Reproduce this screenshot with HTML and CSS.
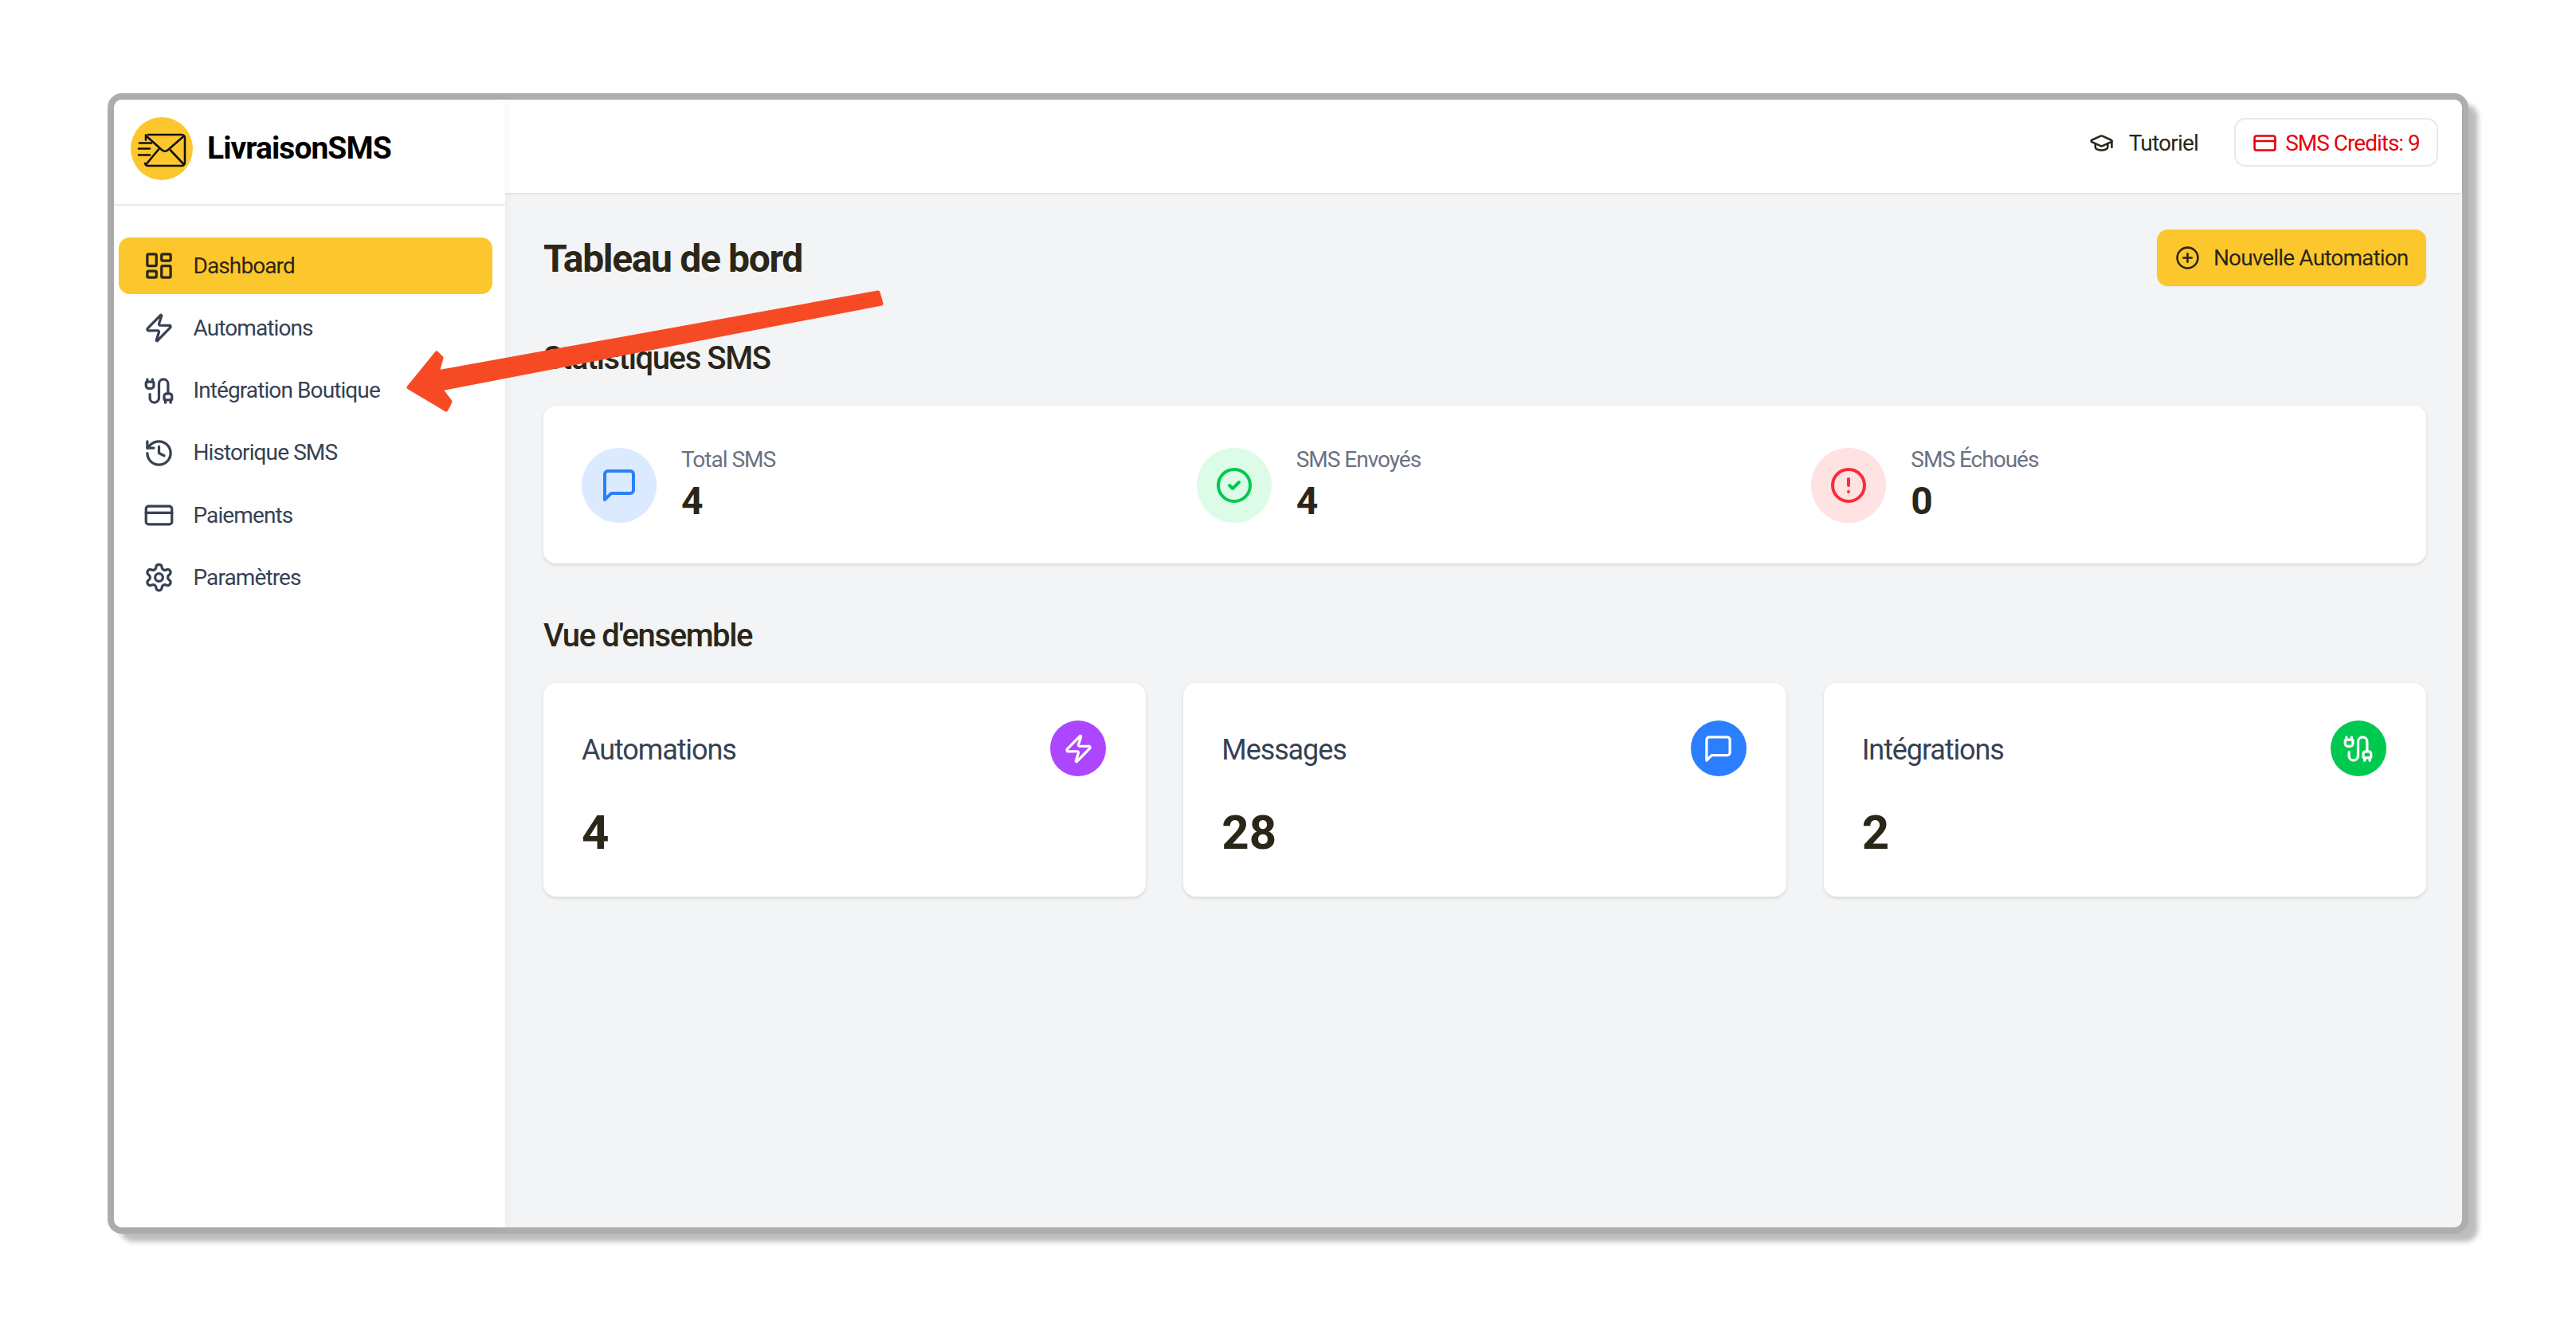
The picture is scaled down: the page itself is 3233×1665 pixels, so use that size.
FILE: index.html
```html
<!DOCTYPE html>
<html lang="fr">
<head>
<meta charset="utf-8">
<title>LivraisonSMS</title>
<link rel="stylesheet" href="styles.css">
</head>
<body>
<svg width="0" height="0" class="defs">
  <symbol id="i-dash" viewBox="0 0 24 24"><rect x="3" y="3" width="7" height="9" rx="1"/><rect x="14" y="3" width="7" height="5" rx="1"/><rect x="14" y="12" width="7" height="9" rx="1"/><rect x="3" y="16" width="7" height="5" rx="1"/></symbol>
  <symbol id="i-zap" viewBox="0 0 24 24"><path d="M4 14a1 1 0 0 1-.78-1.63l9.9-10.2a.5.5 0 0 1 .86.46l-1.92 6.02A1 1 0 0 0 13 10h7a1 1 0 0 1 .78 1.63l-9.9 10.2a.5.5 0 0 1-.86-.46l1.92-6.02A1 1 0 0 0 11 14z"/></symbol>
  <symbol id="i-cable" viewBox="0 0 24 24"><path d="M17 19a1 1 0 0 1-1-1v-2a2 2 0 0 1 2-2h2a2 2 0 0 1 2 2v2a1 1 0 0 1-1 1z"/><path d="M17 21v-2"/><path d="M19 14V6.500a1 1 0 0 0-7 0v11a1 1 0 0 1-7 0v-3"/><path d="M21 21v-2"/><path d="M3 5V3"/><path d="M4 10a2 2 0 0 1-2-2V6a1 1 0 0 1 1-1h4a1 1 0 0 1 1 1v2a2 2 0 0 1-2 2z"/><path d="M7 5V3"/></symbol>
  <symbol id="i-history" viewBox="0 0 24 24"><path d="M3 12a9 9 0 1 0 9-9 9.75 9.75 0 0 0-6.74 2.74L3 8"/><path d="M3 3v5h5"/><path d="M12 7v5l4 2"/></symbol>
  <symbol id="i-card" viewBox="0 0 24 24"><rect x="2" y="5" width="20" height="14" rx="2"/><line x1="2" y1="10" x2="22" y2="10"/></symbol>
  <symbol id="i-gear" viewBox="0 0 24 24"><path d="M12.22 2h-.44a2 2 0 0 0-2 2v.18a2 2 0 0 1-1 1.73l-.43.25a2 2 0 0 1-2 0l-.15-.08a2 2 0 0 0-2.73.73l-.22.38a2 2 0 0 0 .73 2.73l.15.1a2 2 0 0 1 1 1.72v.51a2 2 0 0 1-1 1.74l-.15.09a2 2 0 0 0-.73 2.73l.22.38a2 2 0 0 0 2.73.73l.15-.08a2 2 0 0 1 2 0l.43.25a2 2 0 0 1 1 1.73V20a2 2 0 0 0 2 2h.44a2 2 0 0 0 2-2v-.18a2 2 0 0 1 1-1.73l.43-.25a2 2 0 0 1 2 0l.15.08a2 2 0 0 0 2.73-.73l.22-.39a2 2 0 0 0-.73-2.73l-.15-.08a2 2 0 0 1-1-1.74v-.5a2 2 0 0 1 1-1.74l.15-.09a2 2 0 0 0 .73-2.73l-.22-.38a2 2 0 0 0-2.73-.73l-.15.08a2 2 0 0 1-2 0l-.43-.25a2 2 0 0 1-1-1.73V4a2 2 0 0 0-2-2z"/><circle cx="12" cy="12" r="3"/></symbol>
  <symbol id="i-cap" viewBox="0 0 24 24"><path d="M21.42 10.922a1 1 0 0 0-.019-1.838L12.83 5.18a2 2 0 0 0-1.66 0L2.6 9.08a1 1 0 0 0 0 1.832l8.57 3.908a2 2 0 0 0 1.66 0z"/><path d="M22 10v6"/><path d="M6 12.5V16a6 3 0 0 0 12 0v-3.5"/></symbol>
  <symbol id="i-plus" viewBox="0 0 24 24"><circle cx="12" cy="12" r="10"/><path d="M8 12h8"/><path d="M12 8v8"/></symbol>
  <symbol id="i-msg" viewBox="0 0 24 24"><path d="M21 15a2 2 0 0 1-2 2H7l-4 4V5a2 2 0 0 1 2-2h14a2 2 0 0 1 2 2z"/></symbol>
  <symbol id="i-check" viewBox="0 0 24 24"><circle cx="12" cy="12" r="10"/><path d="m9 12 2 2 4-4"/></symbol>
  <symbol id="i-alert" viewBox="0 0 24 24"><circle cx="12" cy="12" r="10"/><line x1="12" y1="8" x2="12" y2="12"/><line x1="12" y1="16" x2="12.01" y2="16"/></symbol>
</svg>

<div class="window">
  <aside class="sidebar">
    <div class="brand">
      <div class="logo">
        <svg viewBox="0 0 78 78" class="logo-svg">
          <path d="M22 21.500h42a4 4 0 0 1 4 4v31a4 4 0 0 1-4 4H22a4 4 0 0 1-4-3"/>
          <path d="M19.500 23 39 40.500q4 3.500 8 0L67 23"/>
          <path d="M20 58 35 40"/>
          <path d="M66 58 50 41"/>
          <path d="M19 22v6"/>
          <path d="M11 32h15M10 39h14M10 47h14"/>
        </svg>
      </div>
      <span class="brand-name">LivraisonSMS</span>
    </div>
    <nav class="nav">
      <a class="nav-item active"><svg class="ico nav-ico"><use href="#i-dash"/></svg><span class="nav-text">Dashboard</span></a>
      <a class="nav-item"><svg class="ico nav-ico"><use href="#i-zap"/></svg><span class="nav-text">Automations</span></a>
      <a class="nav-item"><svg class="ico nav-ico"><use href="#i-cable"/></svg><span class="nav-text">Intégration Boutique</span></a>
      <a class="nav-item"><svg class="ico nav-ico"><use href="#i-history"/></svg><span class="nav-text">Historique SMS</span></a>
      <a class="nav-item"><svg class="ico nav-ico"><use href="#i-card"/></svg><span class="nav-text">Paiements</span></a>
      <a class="nav-item"><svg class="ico nav-ico"><use href="#i-gear"/></svg><span class="nav-text">Paramètres</span></a>
    </nav>
  </aside>

  <div class="main">
    <header class="topbar">
      <a class="tuto"><svg class="ico top-ico"><use href="#i-cap"/></svg>Tutoriel</a>
      <div class="credits"><svg class="ico top-ico"><use href="#i-card"/></svg>SMS Credits: 9</div>
    </header>

    <section class="content">
      <div class="page-head">
        <h1>Tableau de bord</h1>
        <button class="new-btn"><svg class="ico top-ico"><use href="#i-plus"/></svg>Nouvelle Automation</button>
      </div>

      <h2 class="section-title">Statistiques SMS</h2>
      <div class="stats card">
        <div class="stat">
          <div class="stat-circle bg-blue"><svg class="ico stat-ico c-blue"><use href="#i-msg"/></svg></div>
          <div class="stat-text"><span class="stat-label">Total SMS</span><span class="stat-value">4</span></div>
        </div>
        <div class="stat">
          <div class="stat-circle bg-green"><svg class="ico stat-ico c-green"><use href="#i-check"/></svg></div>
          <div class="stat-text"><span class="stat-label">SMS Envoyés</span><span class="stat-value">4</span></div>
        </div>
        <div class="stat">
          <div class="stat-circle bg-red"><svg class="ico stat-ico c-red"><use href="#i-alert"/></svg></div>
          <div class="stat-text"><span class="stat-label">SMS Échoués</span><span class="stat-value">0</span></div>
        </div>
      </div>

      <h2 class="section-title">Vue d'ensemble</h2>
      <div class="overview">
        <div class="card ov-card">
          <div class="ov-head"><span class="ov-label">Automations</span><span class="ov-circle purple"><svg class="ico ov-ico"><use href="#i-zap"/></svg></span></div>
          <div class="ov-value">4</div>
        </div>
        <div class="card ov-card">
          <div class="ov-head"><span class="ov-label">Messages</span><span class="ov-circle blue"><svg class="ico ov-ico"><use href="#i-msg"/></svg></span></div>
          <div class="ov-value">28</div>
        </div>
        <div class="card ov-card">
          <div class="ov-head"><span class="ov-label">Intégrations</span><span class="ov-circle green"><svg class="ico ov-ico"><use href="#i-cable"/></svg></span></div>
          <div class="ov-value">2</div>
        </div>
      </div>
    </section>
  </div>

  <svg class="arrow" viewBox="0 0 640 180">
    <polygon points="600,11 604,25 51,132 63,148 58,158 11,130 46,87 52,93 47,111"/>
  </svg>
</div>
</body>
</html>
```

FILE: styles.css
```css
* { box-sizing: border-box; }
html, body { margin: 0; background: #fff; }
body {
  padding: 117px 0 0 135px;
  height: 1665px;
  overflow: hidden;
  font-family: "Roboto", "Open Sans", sans-serif;
  color: #2b2618;
}
.defs { position: absolute; }
.ico {
  fill: none;
  stroke: currentColor;
  stroke-width: 2;
  stroke-linecap: round;
  stroke-linejoin: round;
  flex: none;
}
.window {
  position: relative;
  width: 2963px;
  height: 1431px;
  border: 8px solid #aeaeae;
  border-radius: 18px;
  box-shadow: 14px 12px 6px -2px #bdbdbd;
  display: flex;
  overflow: visible;
  background: #f3f4f6;
}
.sidebar {
  width: 491px;
  flex: none;
  background: #fff;
  border-radius: 10px 0 0 10px;
  box-shadow: 0 0 14px rgba(0,0,0,.05);
  position: relative;
  z-index: 2;
}
.brand {
  height: 133px;
  border-bottom: 2px solid #ebe8e4;
  display: flex;
  align-items: center;
  padding: 0 0 9px 21px;
  gap: 18px;
}
.logo {
  width: 78px;
  height: 79px;
  border-radius: 50%;
  background: #fcc72d;
  flex: none;
}
.logo-svg {
  width: 78px;
  height: 79px;
  fill: none;
  stroke: #111;
  stroke-width: 2.6;
  stroke-linecap: round;
  stroke-linejoin: round;
  display: block;
}
.brand-name {
  font-size: 39px;
  font-weight: 700;
  color: #000;
  letter-spacing: -.95px;
}
.nav {
  padding: 40px 16px 0 5.5px;
  display: flex;
  flex-direction: column;
  gap: 7.3px;
}
.nav-item {
  height: 71px;
  display: flex;
  align-items: center;
  gap: 24px;
  padding-left: 31px;
  border-radius: 14px;
  font-size: 28px;
  letter-spacing: -.9px;
  color: #364153;
}
.nav-text { margin-bottom: 1px; }
.nav-item.active {
  background: #fcc72d;
  color: #2b2618;
}
.nav-ico { width: 39px; height: 39px; }
.main {
  flex: 1;
  min-width: 0;
  display: flex;
  flex-direction: column;
}
.topbar {
  height: 117px;
  flex: none;
  background: #fff;
  border-radius: 0 10px 0 0;
  box-shadow: 0 1px 3px rgba(0,0,0,.12);
  display: flex;
  align-items: center;
  justify-content: flex-end;
  padding: 0 30px 10px 0;
  position: relative;
  z-index: 1;
}
.tuto {
  display: flex;
  align-items: center;
  gap: 19px;
  font-size: 28px;
  letter-spacing: -.8px;
  color: #2b2618;
  margin-right: 45px;
  padding-top: 1px;
}
.top-ico { width: 31px; height: 31px; }
.credits {
  height: 61px;
  width: 256px;
  border: 2px solid #ebe8e4;
  border-radius: 14px;
  display: flex;
  align-items: center;
  justify-content: center;
  gap: 10px;
  padding-top: 1px;
  font-size: 28px;
  letter-spacing: -1px;
  color: #e7000b;
}
.content {
  padding: 46px 45px 0 48px;
}
.page-head {
  height: 71px;
  display: flex;
  align-items: center;
  justify-content: space-between;
}
h1 {
  margin: 2px 0 0;
  font-size: 48px;
  font-weight: 700;
  letter-spacing: -1.35px;
  color: #2b2618;
}
.new-btn {
  width: 338px;
  height: 71px;
  border: 0;
  border-radius: 14px;
  background: #fcc72d;
  color: #2b2618;
  font: inherit;
  font-size: 28px;
  letter-spacing: -.85px;
  white-space: nowrap;
  display: flex;
  align-items: center;
  gap: 17px;
  padding: 0 0 0 23px;
  box-shadow: 0 1px 2px rgba(0,0,0,.06);
}
.section-title {
  margin: 66px 0 34px;
  font-size: 40px;
  line-height: 50px;
  font-weight: 500;
  letter-spacing: -1.4px;
  color: #2b2618;
}
.card {
  background: #fff;
  border-radius: 16px;
  box-shadow: 0 2px 4px rgba(0,0,0,.12);
}
.stats {
  height: 198px;
  padding: 51px 48px;
  display: grid;
  grid-template-columns: repeat(3, 1fr);
  column-gap: 48px;
}
.stat { display: flex; align-items: center; gap: 31px; }
.stat-circle {
  width: 94px;
  height: 94px;
  border-radius: 50%;
  display: flex;
  align-items: center;
  justify-content: center;
  flex: none;
}
.bg-blue { background: #dbeafe; }
.bg-green { background: #dcfce7; }
.bg-red { background: #ffe2e2; }
.c-blue { color: #2b7fff; }
.c-green { color: #00c950; }
.c-red { color: #fb2c36; }
.stat-ico { width: 48px; height: 48px; }
.stat-text { display: flex; flex-direction: column; }
.stat-label { font-size: 28px; line-height: 38px; letter-spacing: -1px; color: #6a7282; margin: -2px 0 4px; }
.stat-value { font-size: 48px; line-height: 58px; font-weight: 700; color: #2b2618; }
.overview {
  display: grid;
  grid-template-columns: repeat(3, 1fr);
  gap: 47px;
}
.ov-card {
  height: 268px;
  padding: 47px 50px 47px 48px;
}
.ov-head {
  display: flex;
  align-items: center;
  justify-content: space-between;
  height: 70px;
}
.ov-label { font-size: 36px; letter-spacing: -1.1px; color: #364153; margin-top: 3px; }
.ov-circle {
  width: 70px;
  height: 70px;
  border-radius: 50%;
  display: flex;
  align-items: center;
  justify-content: center;
  color: #fff;
}
.purple { background: #ad46ff; }
.blue { background: #2b7fff; }
.green { background: #00c950; }
.ov-ico { width: 39px; height: 39px; }
.ov-value {
  margin-top: 40px;
  font-size: 60px;
  line-height: 62px;
  font-weight: 700;
  color: #2b2618;
}
.arrow {
  position: absolute;
  left: 359px;
  top: 231px;
  width: 640px;
  height: 180px;
  fill: #f64a25;
  stroke: #f64a25;
  stroke-width: 5;
  stroke-linejoin: round;
  z-index: 5;
}
```
